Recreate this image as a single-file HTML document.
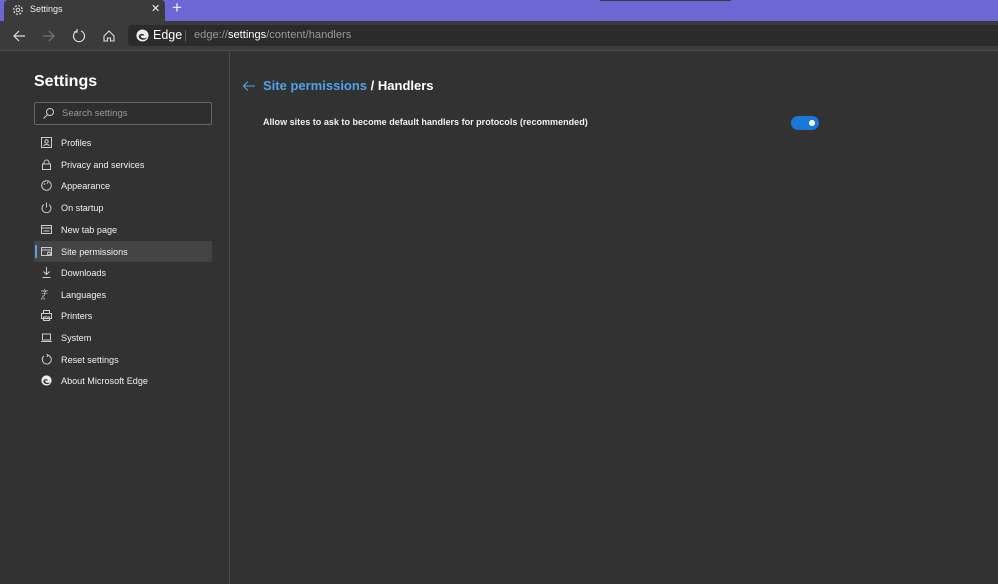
<!DOCTYPE html>
<html><head><style>
*{margin:0;padding:0;box-sizing:border-box}
body{width:998px;height:584px;background:#323232;font-family:"Segoe UI","Liberation Sans",sans-serif;color:#fff;position:relative;overflow:hidden;font-size:12px}
.tabs{position:absolute;left:0;top:0;width:998px;height:21px;background:#6b68d6}
.tab{position:absolute;left:4px;top:0;width:161px;height:21px;background:#3b3b3b;border-radius:4px 4px 0 0}
.tb{position:absolute;left:0;top:21px;width:998px;height:29px;background:#3b3b3b}
.addr{position:absolute;left:128px;top:25px;right:0;height:21px;background:#2b2b2b;border-radius:4px 0 0 4px}
.line{position:absolute;left:0;top:50px;width:998px;height:1px;background:#4a4a4a}
.side{position:absolute;left:229px;top:51px;width:1px;height:533px;background:#4a4a4a}
.nav{position:absolute;left:34px;width:178px;height:21px;font-size:9.1px;line-height:22px;padding-left:27px;color:#f0f0f0}
.nav svg{position:absolute;left:7px;top:5px}
</style></head><body>
<div class="tabs"><div class="tab">
<svg style="position:absolute;left:8px;top:4px" width="12" height="12" viewBox="0 0 12 12"><circle cx="6" cy="6" r="4.3" fill="none" stroke="#ddd" stroke-width="1.2" stroke-dasharray="2 1.4"/><circle cx="6" cy="6" r="1.8" fill="none" stroke="#ddd"/></svg>
<span style="position:absolute;left:26px;top:4px;font-size:9px;color:#eee">Settings</span>
<span style="position:absolute;left:147px;top:2px;font-size:11px;color:#eee">✕</span></div>
<span style="position:absolute;left:172px;top:-2px;font-size:17px;color:#eee">+</span>
<div style="position:absolute;left:600px;top:0;width:131px;height:1px;background:#3a3a4a"></div>
</div>
<div class="tb"></div>
<svg style="position:absolute;left:11px;top:28px" width="16" height="16" viewBox="0 0 16 16"><path d="M14 8H3M8 3L3 8l5 5" fill="none" stroke="#ddd" stroke-width="1.2"/></svg>
<svg style="position:absolute;left:41px;top:28px" width="16" height="16" viewBox="0 0 16 16"><path d="M2 8h11M8 3l5 5-5 5" fill="none" stroke="#777" stroke-width="1.2"/></svg>
<svg style="position:absolute;left:71px;top:28px" width="16" height="16" viewBox="0 0 16 16"><path d="M6 3A5.5 5.5 0 1 0 10 3" fill="none" stroke="#ddd" stroke-width="1.2"/><path d="M6 1v3H3" fill="none" stroke="#ddd" stroke-width="1.2"/></svg>
<svg style="position:absolute;left:101px;top:28px" width="16" height="16" viewBox="0 0 16 16"><path d="M3 8l5-5 5 5v5H9.5V10h-3v3H3z" fill="none" stroke="#ddd" stroke-width="1.1"/></svg>
<div class="addr"></div>
<svg style="position:absolute;left:136px;top:29px" width="13" height="13" viewBox="0 0 14 14"><circle cx="7" cy="7" r="6.5" fill="#eee"/><path d="M3 8c0-3 5-4 6-1H5c0 3 4 4 7 2-2 4-9 3-9-1z" fill="#2b2b2b"/></svg>
<span style="position:absolute;left:153px;top:28px;font-size:12.5px;color:#fff">Edge</span>
<span style="position:absolute;left:184px;top:28px;font-size:12px;color:#666">|</span>
<span style="position:absolute;left:194px;top:29px;font-size:11.1px;color:#999">edge://<span style="color:#fff">settings</span>/content/handlers</span>
<div class="line"></div>
<div class="side"></div>
<div style="position:absolute;left:34px;top:73px;font-size:16px;font-weight:600">Settings</div>
<div style="position:absolute;left:34px;top:102px;width:178px;height:23px;border:1px solid #666;border-radius:2px;background:#2e2e2e"></div>
<svg style="position:absolute;left:42px;top:107px" width="13" height="13" viewBox="0 0 13 13"><circle cx="8" cy="5" r="3.5" fill="none" stroke="#ccc"/><path d="M5.5 7.5L1.5 11.5" stroke="#ccc"/></svg>
<span style="position:absolute;left:62px;top:108px;font-size:9.5px;color:#999">Search settings</span>
<div style="position:absolute;left:34px;top:241px;width:178px;height:21px;background:#444;border-radius:2px"></div>
<div style="position:absolute;left:35px;top:245px;width:2px;height:13px;background:#4ea1e8"></div>
<div class="nav" style="top:132px"><svg width="11" height="11"><rect x=".5" y=".5" width="10" height="10" fill="none" stroke="#ccc"/><circle cx="5.5" cy="4.5" r="1.7" fill="none" stroke="#ccc"/><path d="M2.5 9c1-2 5-2 6 0" fill="none" stroke="#ccc"/></svg>Profiles</div>
<div class="nav" style="top:154px"><svg width="11" height="11"><rect x="1.5" y="5" width="8" height="5.5" fill="none" stroke="#ccc"/><path d="M3 5V3.5a2.5 2.5 0 0 1 5 0V5" fill="none" stroke="#ccc"/></svg>Privacy and services</div>
<div class="nav" style="top:175px"><svg width="11" height="11"><circle cx="5.5" cy="5.5" r="4.8" fill="none" stroke="#ccc"/><circle cx="3.5" cy="4" r=".8" fill="#ccc"/><circle cx="6.5" cy="3" r=".8" fill="#ccc"/></svg>Appearance</div>
<div class="nav" style="top:197px"><svg width="11" height="11"><path d="M3 2.5A4.5 4.5 0 1 0 8 2.5M5.5 0.5v5" fill="none" stroke="#ccc"/></svg>On startup</div>
<div class="nav" style="top:219px"><svg width="11" height="11"><rect x=".5" y="1.5" width="10" height="8" fill="none" stroke="#ccc"/><path d="M.5 4h10M2.5 7h6" stroke="#ccc"/></svg>New tab page</div>
<div class="nav" style="top:241px"><svg width="11" height="11"><rect x=".5" y="1.5" width="10" height="8" fill="none" stroke="#ccc"/><path d="M.5 4h10" stroke="#ccc"/><circle cx="8" cy="7.5" r="1.5" fill="none" stroke="#ccc"/></svg>Site permissions</div>
<div class="nav" style="top:262px"><svg width="11" height="11"><path d="M5.5 0v7M2.5 4.5l3 3 3-3M1.5 10.5h8" fill="none" stroke="#ccc"/></svg>Downloads</div>
<div class="nav" style="top:284px"><svg width="11" height="11"><text x="0" y="6" font-size="7" fill="#ccc">字</text><text x="0" y="11" font-size="6" fill="#ccc">A</text></svg>Languages</div>
<div class="nav" style="top:305px"><svg width="11" height="11"><rect x="2.5" y=".5" width="6" height="3" fill="none" stroke="#ccc"/><rect x=".5" y="3.5" width="10" height="5" fill="none" stroke="#ccc"/><rect x="2.5" y="7" width="6" height="3.5" fill="none" stroke="#ccc"/></svg>Printers</div>
<div class="nav" style="top:327px"><svg width="11" height="11"><rect x="1.5" y="2" width="8" height="6" fill="none" stroke="#ccc"/><path d="M0 9.5h11" stroke="#ccc"/></svg>System</div>
<div class="nav" style="top:349px"><svg width="11" height="11"><path d="M3 2A4.5 4.5 0 1 0 7 1.2M7 1.2L5.5 0M7 1.2L6 3" fill="none" stroke="#ccc"/></svg>Reset settings</div>
<div class="nav" style="top:370px"><svg width="11" height="11" viewBox="0 0 14 14"><circle cx="7" cy="7" r="6.5" fill="#eee"/><path d="M3 8c0-3 5-4 6-1H5c0 3 4 4 7 2-2 4-9 3-9-1z" fill="#323232"/></svg>About Microsoft Edge</div>
<svg style="position:absolute;left:242px;top:80px" width="14" height="12" viewBox="0 0 14 12"><path d="M13 6H2M6 1.5L1.5 6 6 10.5" fill="none" stroke="#4ea1e8" stroke-width="1.1"/></svg>
<div style="position:absolute;left:263px;top:78px;font-size:13px;font-weight:600"><span style="color:#4ea1e8">Site permissions</span> / Handlers</div>
<div style="position:absolute;left:263px;top:117px;font-size:9.05px;font-weight:600;color:#f0f0f0">Allow sites to ask to become default handlers for protocols (recommended)</div>
<div style="position:absolute;left:791px;top:116px;width:28px;height:14px;border-radius:7px;background:#1a78d6"></div>
<div style="position:absolute;left:809px;top:120px;width:6px;height:6px;border-radius:3px;background:#fff"></div>
</body></html>
